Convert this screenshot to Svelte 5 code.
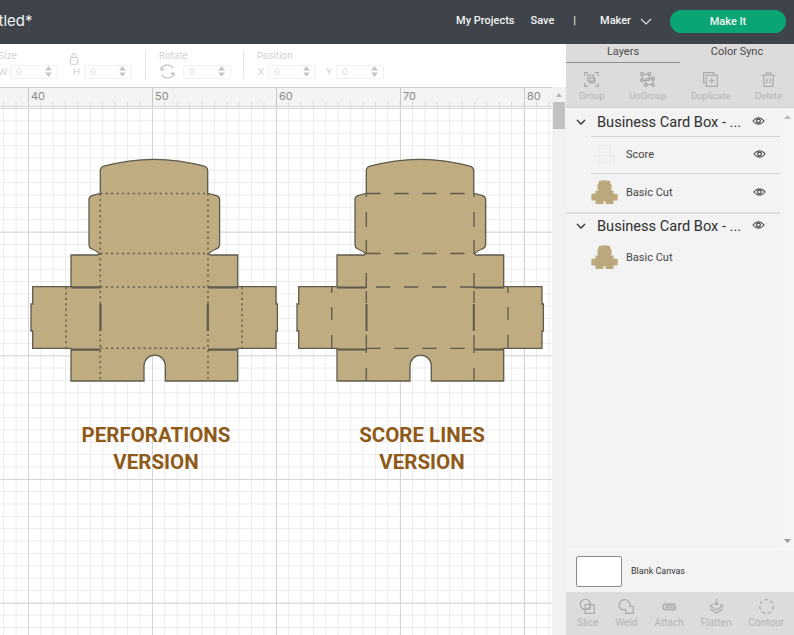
<script lang="ts">
  const diePath =
    'M100.3 171 Q100.3 167.3 104 166.2 Q154 152.4 204 166.2 Q207.7 167.3 207.7 171 V193.3 L216.5 195.6 Q219.6 196.6 219.6 199.5 V244 Q219.6 248 216 249 Q212 250.5 208.5 253.6 L210 255 H237.7 V286.7 H276 V304 H277.4 V331 H276 V348.3 H237.7 V381 H165.3 V365.7 A10.65 10.65 0 0 0 144 365.7 V381 H71 V348.3 H32.7 V331 H31 V304 H32.7 V286.7 H71 V255 H98 L99.5 253.6 Q96 250.5 92 249 Q89 248 89 244 V199.5 Q89 196.6 92 195.6 L100.3 193.3 Z';

  const slits = 'M100.5 304 V331 M207.8 304 V331 M71 287.4 H100 M208 287.4 H238 M71 349.6 H100 M208 349.6 H238';
  const perforations = 'M100.3 193.5 H207.7 M100.3 253.5 H207.7 M100.3 287 H207.7 M100.3 348.3 H207.7 M100.3 193.5 V381 M208 193.5 V381 M66 287 V348 M242 287 V348';
  const scoreH = 'M366.3 193.5 H473.7 M366.3 253.5 H473.7 M366.3 348.3 H473.7 M376 287 H474';
  const foldStops = 'V197 M@ 212 V227 M@ 240 V254 M@ 273 V288 M@ 291 V303 M@ 335 V353 M@ 368 V381';
  const scoreV = ['366.3', '474'].map((x) => `M${x} 193 ` + foldStops.replaceAll('@', x)).join(' ');
  const scoreFlaps = ['331.7', '508'].map((x) => `M${x} 287 V293 M${x} 307 V320 M${x} 335 V348`).join(' ');

  const rulerMarks = [
    { label: '40', x: 31 },
    { label: '50', x: 155 },
    { label: '60', x: 279 },
    { label: '70', x: 403 },
    { label: '80', x: 527 }
  ];

  const topActions = ['Group', 'UnGroup', 'Duplicate', 'Delete'];
  const bottomActions = ['Slice', 'Weld', 'Attach', 'Flatten', 'Contour'];
</script>

{#snippet eye()}
  <svg class="eye" width="13" height="10" viewBox="0 0 14 10" fill="none" stroke="#3d3d3d">
    <path d="M1 5 Q7 -2 13 5 Q7 12 1 5 Z" stroke-width="1.1" />
    <circle cx="7" cy="5" r="2" stroke-width="1.3" />
  </svg>
{/snippet}

{#snippet chevron()}
  <svg class="chev" width="10" height="6" viewBox="0 0 10 6" fill="none" stroke="#333" stroke-width="1.3">
    <path d="M1 1 L5 5 L9 1" />
  </svg>
{/snippet}

{#snippet stepper()}
  <svg width="7" height="11" viewBox="0 0 7 11" fill="#c6c6c6">
    <path d="M3.5 0 L7 4.5 H0 Z M3.5 11 L7 6.5 H0 Z" />
  </svg>
{/snippet}

{#snippet numberBox()}
  <span class="num"><span>0</span>{@render stepper()}</span>
{/snippet}

{#snippet dieThumb()}
  <svg class="thumb" width="27" height="26" viewBox="28 155 252 230">
    <path d={diePath} fill="#bcaa7e" />
    <path d={perforations} fill="none" stroke="#ad9a6f" stroke-width="5" stroke-dasharray="9 14" />
  </svg>
{/snippet}

<div class="app">
  <header class="topbar">
    <span class="doc-title">Untitled*</span>
    <nav class="topnav">
      <span class="projects">My Projects</span>
      <span class="save">Save</span>
      <span class="pipe">|</span>
      <span class="maker">Maker</span>
      <svg class="maker-chev" width="12" height="7" viewBox="0 0 12 7" fill="none" stroke="#e6e7e8" stroke-width="1.1">
        <path d="M1 1 L6 6 L11 1" />
      </svg>
      <button class="make-it">Make It</button>
    </nav>
  </header>

  <div class="body">
    <div class="workspace">
      <div class="toolbar">
        <div class="group size">
          <span class="cap">Size</span>
          <div class="fields">
            <span class="axis">W</span>
            {@render numberBox()}
            <span class="axis h">H</span>
            {@render numberBox()}
          </div>
          <svg class="lock" width="10" height="12" viewBox="0 0 10 13" fill="none" stroke="#c4c4c4">
            <rect x="1" y="5" width="8" height="7.2" rx="1" />
            <path d="M2.7 5 V3 Q2.7 .7 5 .7 Q7.3 .7 7.3 3 V5" />
            <path d="M5 8 V9.4" />
          </svg>
        </div>
        <div class="group rotate">
          <span class="cap">Rotate</span>
          <div class="fields">
            <svg class="rotate-icon" width="15" height="15" viewBox="0 0 15 15" fill="none" stroke="#bbb" stroke-width="1.1">
              <path d="M1.2 6 A6.4 6.4 0 0 1 13 4.2 M13.8 9 A6.4 6.4 0 0 1 2 10.8" />
              <path d="M1 2.5 L1.2 6 L4.5 5.4 M14 12.5 L13.8 9 L10.5 9.6" />
            </svg>
            {@render numberBox()}
          </div>
        </div>
        <div class="group position">
          <span class="cap">Position</span>
          <div class="fields">
            <span class="axis">X</span>
            {@render numberBox()}
            <span class="axis y">Y</span>
            {@render numberBox()}
          </div>
        </div>
      </div>

      <div class="ruler">
        {#each rulerMarks as mark}
          <span class="mark" style="left: {mark.x}px">{mark.label}</span>
        {/each}
      </div>

      <div class="canvas-row">
        <div class="canvas">
          <svg class="art" width="552" height="528" viewBox="0 107 552 528">
            <path d={diePath} fill="#bfac80" stroke="#5f5a4c" stroke-width="1.3" />
            <path d={slits} fill="none" stroke="#5f5a4c" stroke-width="2.2" />
            <path d={perforations} fill="none" stroke="#6b6048" stroke-width="1.5" stroke-dasharray="2.2 3.2" />

            <g transform="translate(266 0)">
              <path d={diePath} fill="#bfac80" stroke="#5f5a4c" stroke-width="1.3" />
              <path d={slits} fill="none" stroke="#5f5a4c" stroke-width="2" />
            </g>
            <path d={scoreH} fill="none" stroke="#5f5a4c" stroke-width="1.3" stroke-dasharray="14.3 13.7" />
            <path d={scoreV} fill="none" stroke="#5f5a4c" stroke-width="1.3" />
            <path d={scoreFlaps} fill="none" stroke="#5f5a4c" stroke-width="1.3" />
          </svg>
          <p class="caption perf">PERFORATIONS<br />VERSION</p>
          <p class="caption score">SCORE LINES<br />VERSION</p>
        </div>
        <div class="vscroll">
          <span class="thumb-bar"></span>
        </div>
      </div>
    </div>

    <aside class="panel">
      <div class="tabs">
        <span class="tab active">Layers</span>
        <span class="tab">Color Sync</span>
      </div>

      <div class="actions top">
        {#each topActions as action}
          <div class="action">
            <svg width="17" height="17" viewBox="0 0 20 20" fill="none" stroke="#a9a9a9" stroke-width="1.4">
              {#if action === 'Group'}
                <path d="M2 6 V2 H6 M14 2 H18 V6 M2 14 V18 H6 M18 14 V18 H14" />
                <rect x="5.5" y="5" width="7" height="7" />
                <rect x="8" y="8" width="6" height="6" />
              {:else if action === 'UnGroup'}
                <rect x="4" y="4" width="8" height="7" />
                <rect x="8" y="9" width="8" height="7" />
                <circle cx="3.5" cy="3.5" r="1.8" />
                <circle cx="12" cy="3.5" r="1.8" />
                <circle cx="3.5" cy="11" r="1.8" />
                <circle cx="8" cy="16.5" r="1.8" />
                <circle cx="16.5" cy="9" r="1.8" />
                <circle cx="16.5" cy="16.5" r="1.8" />
              {:else if action === 'Duplicate'}
                <path d="M4 14 H2 V2 H14 V5" />
                <rect x="5" y="5" width="13" height="13" />
                <path d="M11.5 8 V15 M8 11.5 H15" />
              {:else}
                <path d="M2 5 H18 M7 5 V2.5 H13 V5" />
                <path d="M4 5 L5 18 H15 L16 5" />
                <path d="M8 8.5 V14.5 M12 8.5 V14.5" />
              {/if}
            </svg>
            <span>{action}</span>
          </div>
        {/each}
      </div>

      <div class="layers">
        <div class="layer-list">
          <div class="layer-group first">
            {@render chevron()}
            <span class="name">Business Card Box - ...</span>
            {@render eye()}
          </div>
          <div class="layer-row ruled">
            <svg class="thumb" width="27" height="26" viewBox="28 155 252 230">
              <path d={perforations} fill="none" stroke="#cfcfcf" stroke-width="5" stroke-dasharray="7 12" />
              <path d="M100.3 160 V193 M208 160 V193 M66 287 H100 M208 287 H242" fill="none" stroke="#dcdcdc" stroke-width="5" stroke-dasharray="7 12" />
            </svg>
            <span class="label">Score</span>
            {@render eye()}
          </div>
          <div class="layer-row ruled basic">
            {@render dieThumb()}
            <span class="label">Basic Cut</span>
            {@render eye()}
          </div>
          <div class="layer-group second">
            {@render chevron()}
            <span class="name">Business Card Box - ...</span>
            {@render eye()}
          </div>
          <div class="layer-row plain">
            {@render dieThumb()}
            <span class="label">Basic Cut</span>
          </div>
        </div>
        <div class="list-scroll">
          <svg width="7" height="4" viewBox="0 0 7 4" fill="#bbb"><path d="M3.5 0 L7 4 H0 Z" /></svg>
          <svg width="7" height="4" viewBox="0 0 7 4" fill="#999"><path d="M3.5 4 L7 0 H0 Z" /></svg>
        </div>
      </div>

      <div class="canvas-pick">
        <span class="swatch"></span>
        <span>Blank Canvas</span>
      </div>

      <div class="actions bottom">
        {#each bottomActions as action}
          <div class="action">
            <svg width="17" height="17" viewBox="0 0 20 20" fill="none" stroke="#a9a9a9" stroke-width="1.4">
              {#if action === 'Slice'}
                <circle cx="7.5" cy="7.5" r="6" />
                <path d="M14 8 H18 V18 H7 V14" />
                <path d="M7 8 L13 7 V13 H7 Z" />
              {:else if action === 'Weld'}
                <path d="M8 2 A6.5 6.5 0 0 0 4 13.6 H9 V18 H18 V10 H14 A6.5 6.5 0 0 0 8 2 Z" />
              {:else if action === 'Attach'}
                <path d="M17 7 H6 A3.5 3.5 0 0 0 6 14 H15 A2.5 2.5 0 0 0 15 9 H7 A1.2 1.2 0 0 0 7 11.6 H16" />
              {:else if action === 'Flatten'}
                <path d="M10 1 V8 M7.5 5.5 L10 8 L12.5 5.5" />
                <path d="M6 7 L2.5 9.5 L10 14 L17.5 9.5 L14 7" />
                <path d="M3 13 L10 18 L17 13" />
              {:else}
                <circle cx="10" cy="10" r="8" stroke-dasharray="4.2 2.8" />
              {/if}
            </svg>
            <span>{action}</span>
          </div>
        {/each}
      </div>
    </aside>
  </div>
</div>

<style>
  :global(body) {
    margin: 0;
    background: #fff;
  }

  .app {
    width: 794px;
    height: 635px;
    overflow: hidden;
    font-family: Roboto, "Liberation Sans", sans-serif;
    display: flex;
    flex-direction: column;
  }

  .topbar {
    height: 44px;
    flex: none;
    background: #3f444b;
    display: flex;
    align-items: center;
    justify-content: space-between;
    color: #f1f2f3;
    overflow: hidden;
  }

  .doc-title {
    font-family: Inter, sans-serif;
    font-size: 15px;
    margin-left: -30px;
    margin-top: -4px;
  }

  .topnav {
    display: flex;
    align-items: center;
    font-size: 11px;
    font-weight: 500;
    padding: 0 8px 1px 0;
  }

  .topnav > span { padding-bottom: 2px; }

  .save { margin-left: 16px; }
  .pipe { margin-left: 19px; }
  .maker { margin-left: 24px; }
  .maker-chev { margin-left: 9px; }

  .make-it {
    margin-left: 18px;
    width: 116px;
    height: 23px;
    border: 0;
    border-radius: 12px;
    background: #0aa574;
    color: #f1f7f4;
    font: 500 11px Roboto, sans-serif;
  }

  .body {
    flex: 1;
    display: flex;
    min-height: 0;
  }

  .workspace {
    width: 566px;
    display: flex;
    flex-direction: column;
  }

  .toolbar {
    height: 43px;
    flex: none;
    display: flex;
    background: #fff;
    padding-top: 6px;
    box-sizing: border-box;
    margin-left: -15px;
    color: #d2d2d2;
    font-size: 9.5px;
    font-family: Inter, sans-serif;
  }

  .group {
    position: relative;
    display: flex;
    flex-direction: column;
    gap: 3px;
    height: 29px;
    padding: 0 12px 0 13px;
    border-right: 1px solid #e4e4e4;
  }

  .group.size { padding-right: 13px; }
  .group.position { border-right: 0; }

  .cap { line-height: 11px; }

  .fields {
    display: flex;
    align-items: center;
    gap: 3px;
    height: 15px;
  }

  .rotate-icon { margin: 0 5px 0 1px; }

  .axis { width: 9px; text-align: center; }
  .axis.h { margin-left: 11px; }
  .axis.y { margin-left: 6px; }
  .position .axis { width: 8px; }

  .lock {
    position: absolute;
    left: 84px;
    top: 3px;
  }

  .num {
    width: 48px;
    height: 14px;
    box-sizing: border-box;
    border: 1px solid #f0f0f0;
    border-radius: 2px;
    display: flex;
    align-items: center;
    justify-content: space-between;
    padding: 0 5px;
    color: #e0e0e0;
  }

  .ruler {
    position: relative;
    height: 20px;
    flex: none;
    box-sizing: border-box;
    width: 552px;
    border-top: 1px solid #cfcfcf;
    border-bottom: 1px solid #d6d6d6;
    background-color: #f4f4f4;
    background-image:
      linear-gradient(90deg, #c9c9c9 1px, transparent 1px),
      linear-gradient(90deg, #d5d5d5 1px, transparent 1px);
    background-size: 124px 100%, 12.4px 4px;
    background-position: 28px 0, 3.2px bottom;
    background-repeat: repeat-x;
    font-size: 11px;
    color: #8a8a8a;
    font-family: Inter, sans-serif;
  }

  .mark {
    position: absolute;
    top: 1px;
  }

  .canvas-row {
    flex: 1;
    display: flex;
    min-height: 0;
  }

  .canvas {
    position: relative;
    width: 552px;
    overflow: hidden;
    background-color: #fff;
    background-image:
      linear-gradient(90deg, #d4d5d8 1.4px, transparent 1.4px),
      linear-gradient(#d4d5d8 1.2px, transparent 1.2px),
      linear-gradient(90deg, #ebebed 1px, transparent 1px),
      linear-gradient(#ebebed 1px, transparent 1px);
    background-size: 124px 100%, 100% 123.7px, 12.4px 100%, 100% 12.37px;
    background-position: 28px 0, 0 1px, 3.2px 0, 0 1px;
  }

  .art {
    position: absolute;
    left: 0;
    top: 0;
  }

  .caption {
    position: absolute;
    top: 315px;
    margin: 0;
    width: 200px;
    text-align: center;
    font: 700 20.5px/27px Roboto, sans-serif;
    color: #8f5a17;
  }

  .caption.perf { left: 56px; }
  .caption.score { left: 322px; }

  .vscroll {
    position: relative;
    width: 14px;
    background: #f1f1f1;
    margin-top: -20px;
  }

  .vscroll::before {
    content: '';
    position: absolute;
    left: 4px;
    top: 6px;
    border: 3px solid transparent;
    border-top: 0;
    border-bottom: 4px solid #b5b5b5;
  }

  .thumb-bar {
    position: absolute;
    left: 1px;
    top: 15px;
    width: 12px;
    height: 27px;
    background: #c1c1c1;
  }

  .panel {
    width: 228px;
    display: flex;
    flex-direction: column;
    background: #f3f3f3;
    color: #333;
  }

  .tabs {
    height: 19px;
    flex: none;
    display: grid;
    grid-template-columns: 114px 114px;
    background: #dcdcdc;
    font-size: 11px;
    text-align: center;
    line-height: 16px;
    color: #4a4a4a;
  }

  .tab.active { border-bottom: 1px solid #8f8f8f; }

  .actions {
    flex: none;
    display: flex;
    justify-content: space-between;
    background: #dcdcdc;
    color: #b5b5b5;
    font-size: 9.5px;
  }

  .actions.top {
    height: 45px;
    border-bottom: 1px solid #cfcfcf;
    box-sizing: border-box;
    padding: 0 12px 0 13px;
  }

  .actions.top .action { padding-top: 8px; }

  .actions.bottom {
    height: 43px;
    padding: 0 10px 0 11px;
    font-size: 10px;
  }

  .action {
    flex: none;
    display: flex;
    flex-direction: column;
    align-items: center;
    gap: 2px;
    padding-top: 6px;
  }

  .layers {
    flex: 1;
    display: flex;
    min-height: 0;
  }

  .layer-list {
    width: 214px;
  }

  .layer-group {
    height: 28px;
    box-sizing: border-box;
    display: flex;
    align-items: center;
    padding-left: 10px;
    font-size: 14.6px;
    color: #2f2f2f;
  }

  .layer-group.second {
    border-top: 2px solid #dedede;
    padding-bottom: 2px;
  }

  .layer-group .name {
    margin-left: 11px;
    width: 155px;
    white-space: nowrap;
  }

  .layer-group .eye { margin-top: -2px; }

  .layer-row {
    margin-left: 25px;
    box-sizing: border-box;
    display: flex;
    align-items: center;
    font-size: 11px;
    color: #444;
  }

  .layer-row.ruled {
    border-top: 1px solid #d4d4d4;
    height: 37px;
    padding-bottom: 2px;
  }

  .layer-row.basic { height: 39px; }
  .layer-row.plain { height: 34px; }

  .layer-row .label {
    margin-left: 8px;
    width: 127px;
  }

  .layer-row .thumb { flex: none; }

  .list-scroll {
    flex: 1;
    display: flex;
    flex-direction: column;
    justify-content: space-between;
    align-items: center;
    padding: 7px 0 6px;
    background: #f5f5f5;
  }

  .canvas-pick {
    height: 43px;
    flex: none;
    box-sizing: border-box;
    display: flex;
    align-items: center;
    padding-left: 10px;
    gap: 9px;
    font-size: 9px;
    color: #333;
    border-top: 1px solid #f8f8f8;
  }

  .swatch {
    width: 46px;
    height: 31px;
    box-sizing: border-box;
    background: #fff;
    border: 1px solid #8c8c8c;
    border-radius: 2px;
  }
</style>
